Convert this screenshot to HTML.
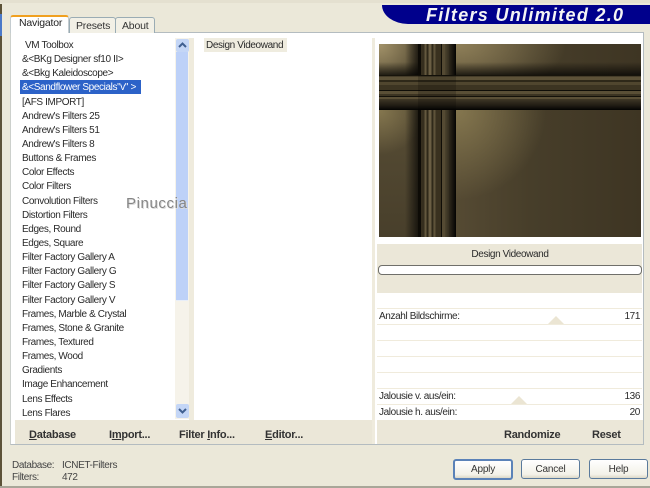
<!DOCTYPE html>
<html>
<head>
<meta charset="utf-8">
<style>
html,body{margin:0;padding:0}
body{width:650px;height:488px;overflow:hidden;position:relative;background:#ebe8d9;font-family:"Liberation Sans",sans-serif;font-size:10px;color:#2a2a2a}
.a{position:absolute}
.t{position:absolute;white-space:nowrap;line-height:14px;letter-spacing:-.38px}
.b{font-weight:bold;font-size:11px;color:#333;letter-spacing:-.25px}
.btn{position:absolute;top:459px;width:57px;height:18px;border:1px solid #5a7a9c;border-radius:3px;background:linear-gradient(#fff,#f3f1e8 80%,#dcd8c8);text-align:center;line-height:19px;color:#333;font-size:10px;letter-spacing:-.2px}
.row{position:absolute;left:377px;width:265px;height:15px;background:#fff;border-bottom:1px solid #f0ebdc}
u{text-decoration:underline}
#list{position:absolute;left:0;top:4px}
</style>
</head>
<body>
<!-- window edge -->
<div class="a" style="left:0;top:4px;width:2px;height:484px;background:#5c5238"></div>
<div class="a" style="left:0;top:14px;width:2px;height:22px;background:#4a78c8"></div>
<div class="a" style="left:0;top:0;width:650px;height:3px;background:#e4e0d0"></div>
<div class="a" style="left:0;top:486px;width:650px;height:2px;background:#a8a698"></div>

<!-- banner -->
<div class="a" style="left:382px;top:5px;width:268px;height:19px;background:#00008c;border-bottom-left-radius:26px 19px"></div>
<div class="t" style="left:426px;top:7px;line-height:17px;font-size:18px;font-weight:bold;font-style:italic;color:#f4f4f4;letter-spacing:1.3px">Filters Unlimited 2.0</div>

<!-- main panel -->
<div class="a" style="left:10px;top:32px;width:634px;height:413px;background:#fff;border:1px solid #b4bcc0;border-left-color:#ccd0cc;box-sizing:border-box"></div>

<!-- tabs -->
<div class="a" style="left:69px;top:17px;width:45px;height:15px;background:#f2f0e6;border:1px solid #9aacb4;border-bottom:0;border-radius:3px 3px 0 0"></div>
<div class="a" style="left:115px;top:17px;width:38px;height:15px;background:#f2f0e6;border:1px solid #9aacb4;border-bottom:0;border-radius:3px 3px 0 0"></div>
<div class="a" style="left:10px;top:15px;width:59px;height:18px;background:#fff;border:1px solid #c4ccd0;border-bottom:0;border-top:2px solid #f0a020;border-radius:3px 3px 0 0;box-sizing:border-box"></div>
<div class="t" style="left:19px;top:16px;font-size:10.5px;color:#222;letter-spacing:-.2px">Navigator</div>
<div class="t" style="left:76px;top:19px;font-size:10.5px;color:#333;letter-spacing:-.2px">Presets</div>
<div class="t" style="left:122px;top:19px;font-size:10.5px;color:#333;letter-spacing:-.2px">About</div>

<!-- list -->
<div class="a" style="left:20px;top:80px;width:121px;height:14px;background:#2c62c8"></div>
<div id="list">
<div class="t" style="left:25px;top:35px">VM Toolbox</div>
<div class="t" style="left:22px;top:49px">&amp;&lt;BKg Designer sf10 II&gt;</div>
<div class="t" style="left:22px;top:63px">&amp;&lt;Bkg Kaleidoscope&gt;</div>
<div class="t" style="left:22px;top:77px;color:#fff">&amp;&lt;Sandflower Specials"v" &gt;</div>
<div class="t" style="left:22px;top:92px">[AFS IMPORT]</div>
<div class="t" style="left:22px;top:106px">Andrew's Filters 25</div>
<div class="t" style="left:22px;top:120px">Andrew's Filters 51</div>
<div class="t" style="left:22px;top:134px">Andrew's Filters 8</div>
<div class="t" style="left:22px;top:148px">Buttons &amp; Frames</div>
<div class="t" style="left:22px;top:162px">Color Effects</div>
<div class="t" style="left:22px;top:176px">Color Filters</div>
<div class="t" style="left:22px;top:191px">Convolution Filters</div>
<div class="t" style="left:22px;top:205px">Distortion Filters</div>
<div class="t" style="left:22px;top:219px">Edges, Round</div>
<div class="t" style="left:22px;top:233px">Edges, Square</div>
<div class="t" style="left:22px;top:247px">Filter Factory Gallery A</div>
<div class="t" style="left:22px;top:261px">Filter Factory Gallery G</div>
<div class="t" style="left:22px;top:275px">Filter Factory Gallery S</div>
<div class="t" style="left:22px;top:290px">Filter Factory Gallery V</div>
<div class="t" style="left:22px;top:304px">Frames, Marble &amp; Crystal</div>
<div class="t" style="left:22px;top:318px">Frames, Stone &amp; Granite</div>
<div class="t" style="left:22px;top:332px">Frames, Textured</div>
<div class="t" style="left:22px;top:346px">Frames, Wood</div>
<div class="t" style="left:22px;top:360px">Gradients</div>
<div class="t" style="left:22px;top:374px">Image Enhancement</div>
<div class="t" style="left:22px;top:389px">Lens Effects</div>
<div class="t" style="left:22px;top:403px">Lens Flares</div>
</div>

<!-- scrollbar -->
<div class="a" style="left:175px;top:38px;width:14px;height:381px;background:#f6f3ea"></div>
<div class="a" style="left:176px;top:52px;width:12px;height:248px;background:#bdd1f8;border-bottom:1px solid #e8eef8"></div>
<div class="a" style="left:176px;top:39px;width:13px;height:13px;background:#c4d6f6;border-radius:2px"></div>
<div class="a" style="left:176px;top:404px;width:13px;height:14px;background:#c4d6f6;border-radius:2px"></div>
<svg class="a" style="left:176px;top:39px" width="13" height="13"><path d="M3 8 L6.5 4.5 L10 8" fill="none" stroke="#3f5f90" stroke-width="2"/></svg>
<svg class="a" style="left:176px;top:404px" width="13" height="14"><path d="M3 5 L6.5 8.5 L10 5" fill="none" stroke="#3f5f90" stroke-width="2"/></svg>
<div class="a" style="left:189px;top:38px;width:5px;height:382px;background:#efebdd"></div>

<!-- middle -->
<div class="a" style="left:204px;top:38px;width:83px;height:14px;background:#efecdf"></div>
<div class="t" style="left:206px;top:39px">Design Videowand</div>
<div class="a" style="left:372px;top:38px;width:3px;height:406px;background:#efebdd"></div>

<!-- preview -->
<svg class="a" style="left:379px;top:44px" width="262" height="193" viewBox="0 0 262 193">
<defs>
<linearGradient id="g" gradientUnits="userSpaceOnUse" x1="77" x2="262" y1="0" y2="0"><stop offset="0" stop-color="#554a33"/><stop offset=".4" stop-color="#473e2a"/><stop offset="1" stop-color="#3e3523"/></linearGradient>
<linearGradient id="gl" x1="0" x2="0" y1="0" y2="1"><stop offset="0" stop-color="#5e5339"/><stop offset="1" stop-color="#483f2b"/></linearGradient>
<radialGradient id="r1" gradientUnits="userSpaceOnUse" cx="77" cy="0" r="110" gradientTransform="translate(77 0) scale(1 .5) translate(-77 0)"><stop offset="0" stop-color="#8f8059"/><stop offset="1" stop-color="#8f8059" stop-opacity="0"/></radialGradient>
<radialGradient id="r2" gradientUnits="userSpaceOnUse" cx="77" cy="66" r="90"><stop offset="0" stop-color="#85774f"/><stop offset="1" stop-color="#85774f" stop-opacity="0"/></radialGradient>
<radialGradient id="r3" gradientUnits="userSpaceOnUse" cx="0" cy="0" r="42"><stop offset="0" stop-color="#a3936a"/><stop offset="1" stop-color="#a3936a" stop-opacity="0"/></radialGradient>
<radialGradient id="r4" gradientUnits="userSpaceOnUse" cx="0" cy="66" r="45"><stop offset="0" stop-color="#85774f"/><stop offset="1" stop-color="#85774f" stop-opacity="0"/></radialGradient>
<linearGradient id="sh" x1="0" x2="0" y1="0" y2="1"><stop offset="0" stop-color="#000" stop-opacity="0"/><stop offset="1" stop-color="#000" stop-opacity=".7"/></linearGradient>
<linearGradient id="sh2" x1="0" x2="0" y1="0" y2="1"><stop offset="0" stop-color="#000" stop-opacity=".1"/><stop offset=".6" stop-color="#000" stop-opacity=".55"/><stop offset="1" stop-color="#000" stop-opacity=".95"/></linearGradient>
<linearGradient id="vb" x1="0" x2="1" y1="0" y2="0"><stop offset="0" stop-color="#000" stop-opacity="0"/><stop offset="1" stop-color="#000" stop-opacity=".7"/></linearGradient>
<linearGradient id="vb2" x1="0" x2="1" y1="0" y2="0"><stop offset="0" stop-color="#000" stop-opacity=".1"/><stop offset=".5" stop-color="#000" stop-opacity=".5"/><stop offset="1" stop-color="#000" stop-opacity=".95"/></linearGradient>
</defs>
<rect width="262" height="193" fill="url(#g)"/>
<rect x="0" y="0" width="40" height="193" fill="url(#gl)"/>
<rect x="77" y="0" width="185" height="31" fill="url(#r1)"/>
<rect x="77" y="66" width="185" height="127" fill="url(#r2)"/>
<rect x="0" y="0" width="40" height="31" fill="url(#r3)"/>
<rect x="0" y="66" width="40" height="127" fill="url(#r4)"/>
<rect x="26" y="0" width="14" height="193" fill="url(#vb)"/>
<rect x="0" y="18" width="262" height="13" fill="url(#sh)"/>
<!-- vertical band -->
<g>
<rect x="39" y="0" width="38" height="193" fill="#4b422d"/>
<rect x="39" y="0" width="3" height="193" fill="#0d0b06"/>
<rect x="42" y="0" width="3" height="193" fill="#352e1e"/>
<rect x="46" y="0" width="1" height="193" fill="#63583e"/>
<rect x="48" y="0" width="1" height="193" fill="#2f2919"/>
<rect x="50" y="0" width="2" height="193" fill="#6a5e43"/>
<rect x="53" y="0" width="1" height="193" fill="#2f2919"/>
<rect x="55" y="0" width="1" height="193" fill="#5e5339"/>
<rect x="57" y="0" width="5" height="193" fill="#39311f"/>
<rect x="62" y="0" width="1" height="193" fill="#0f0d07"/>
<rect x="63" y="0" width="7" height="193" fill="#544a33"/>
<rect x="66" y="0" width="11" height="193" fill="url(#vb2)"/>
</g>
<!-- horizontal band -->
<g>
<rect x="0" y="31" width="262" height="35" fill="#463d2a"/>
<rect x="0" y="31" width="262" height="1" fill="#17140b"/>
<rect x="0" y="33" width="262" height="3" fill="#5d5238"/>
<rect x="0" y="36" width="262" height="2" fill="#2e2819"/>
<rect x="0" y="38" width="262" height="3" fill="#50462f"/>
<rect x="0" y="41" width="262" height="5" fill="#3c3422"/>
<rect x="0" y="46" width="262" height="1" fill="#0f0d07"/>
<rect x="0" y="47" width="262" height="3" fill="#5a4f36"/>
<rect x="0" y="50" width="262" height="2" fill="#3c3422"/>
<rect x="0" y="52" width="262" height="1" fill="#14110a"/>
<rect x="0" y="53" width="262" height="2" fill="#5a4f36"/>
<rect x="0" y="55" width="262" height="11" fill="url(#sh2)"/>
</g>
<!-- crossing darkening -->
<rect x="39" y="31" width="38" height="35" fill="#000" fill-opacity=".18"/>
</svg>

<!-- panel right -->
<div class="a" style="left:377px;top:244px;width:265px;height:49px;background:#ebe7d8"></div>
<div class="t" style="left:377px;top:248px;width:266px;text-align:center">Design Videowand</div>
<div class="a" style="left:378px;top:265px;width:262px;height:8px;background:#fff;border:1px solid #6f6f6a;border-radius:4px"></div>

<div class="row" style="top:293px"></div>
<div class="row" style="top:309px"></div>
<div class="row" style="top:325px"></div>
<div class="row" style="top:341px"></div>
<div class="row" style="top:357px"></div>
<div class="row" style="top:373px"></div>
<div class="row" style="top:389px"></div>
<div class="row" style="top:405px;border-bottom:0"></div>
<div class="a" style="left:548px;top:316px;width:0;height:0;border-left:8px solid transparent;border-right:8px solid transparent;border-bottom:8px solid #ebe5d3"></div>
<div class="a" style="left:511px;top:396px;width:0;height:0;border-left:8px solid transparent;border-right:8px solid transparent;border-bottom:8px solid #ebe5d3"></div>
<div class="t" style="left:379px;top:310px">Anzahl Bildschirme:</div>
<div class="t" style="left:540px;top:310px;width:100px;text-align:right">171</div>
<div class="t" style="left:379px;top:390px">Jalousie v. aus/ein:</div>
<div class="t" style="left:540px;top:390px;width:100px;text-align:right">136</div>
<div class="t" style="left:379px;top:406px">Jalousie h. aus/ein:</div>
<div class="t" style="left:540px;top:406px;width:100px;text-align:right">20</div>

<!-- bottom strips -->
<div class="a" style="left:15px;top:420px;width:357px;height:24px;background:#ebe7d8"></div>
<div class="a" style="left:377px;top:420px;width:266px;height:24px;background:#ebe7d8"></div>
<div class="t b" style="left:29px;top:428px"><u>D</u>atabase</div>
<div class="t b" style="left:109px;top:428px">I<u>m</u>port...</div>
<div class="t b" style="left:179px;top:428px">Filter <u>I</u>nfo...</div>
<div class="t b" style="left:265px;top:428px"><u>E</u>ditor...</div>
<div class="t b" style="left:504px;top:428px">Randomize</div>
<div class="t b" style="left:592px;top:428px">Reset</div>

<!-- status -->
<div class="t" style="left:12px;top:459px;color:#444">Database:</div>
<div class="t" style="left:62px;top:459px;color:#444">ICNET-Filters</div>
<div class="t" style="left:12px;top:471px;color:#444">Filters:</div>
<div class="t" style="left:62px;top:471px;color:#444">472</div>

<!-- buttons -->
<div class="btn" style="left:453px;border:2px solid #5b82b8;width:56px;height:17px;line-height:17px">Apply</div>
<div class="btn" style="left:521px">Cancel</div>
<div class="btn" style="left:589px">Help</div>

<!-- watermark -->
<div class="t" style="left:126px;top:196px;font-size:15px;line-height:16px;color:#858585;letter-spacing:.6px;text-shadow:1px 1px 0 #dcdcdc">Pinuccia</div>
</body>
</html>
